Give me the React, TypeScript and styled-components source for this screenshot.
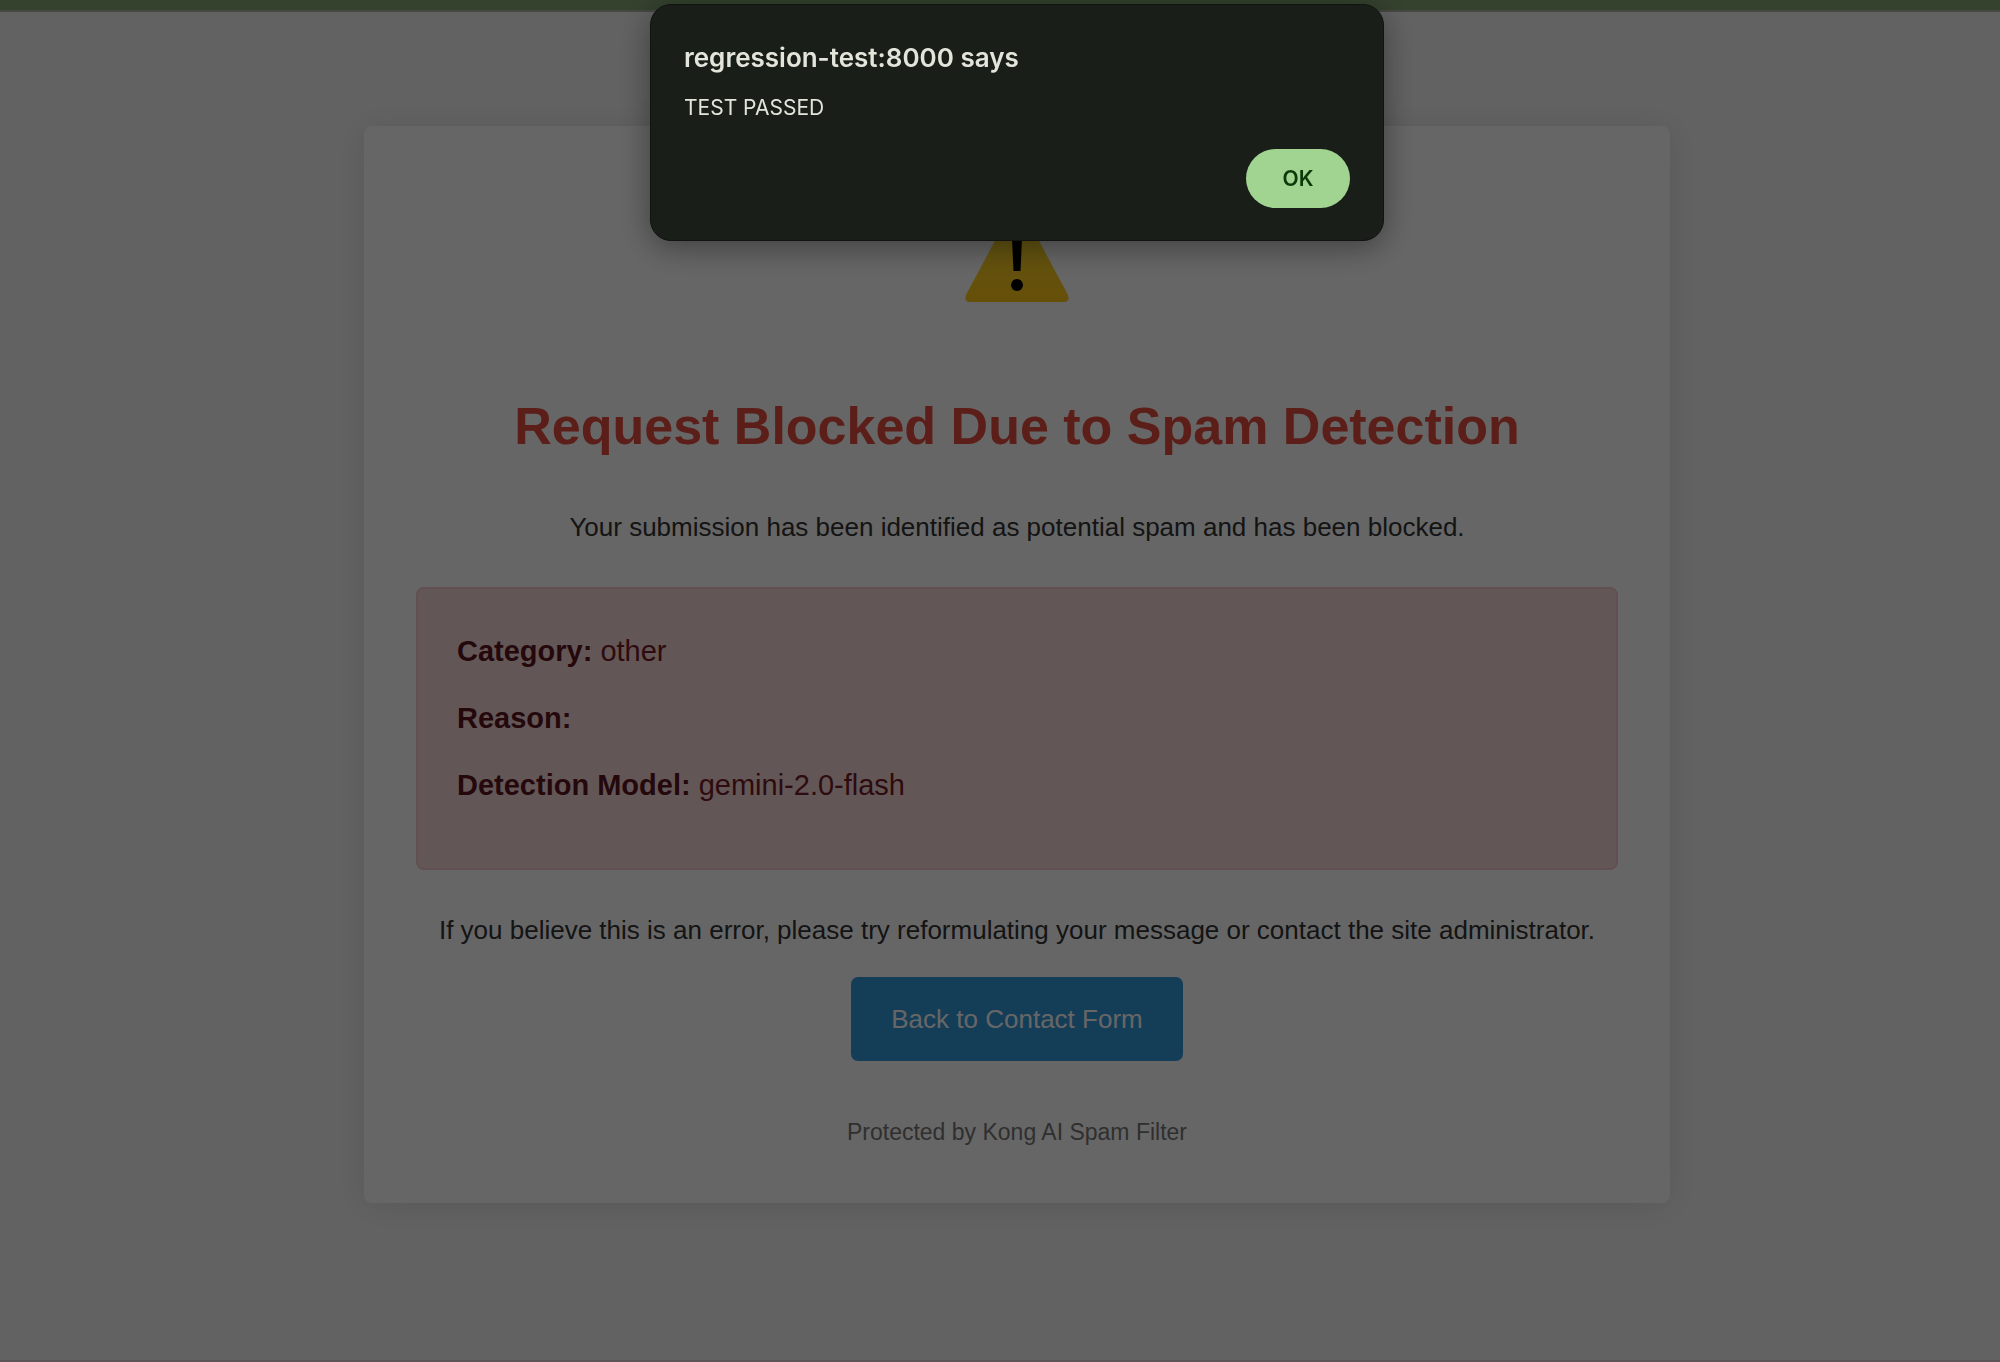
import React, { useState } from "react";
import styled, { createGlobalStyle } from "styled-components";

const GlobalStyle = createGlobalStyle`
  *, *::before, *::after { box-sizing: border-box; }
  body {
    margin: 0;
    background: #f5f5f5;
    color: #333;
    font-family: "Liberation Sans", Arial, sans-serif;
    font-size: 26px;
    line-height: 42px;
  }
`;

const Page = styled.div`
  display: flex;
  flex-direction: column;
  min-height: 100vh;
`;

const ToolbarEdge = styled.div`
  height: 12px;
  background: #84a573;
  border-bottom: 2px solid #b2b2a6;
`;

const Main = styled.main`
  flex: 1;
  display: flex;
  justify-content: center;
  align-items: flex-start;
  padding: 114px 0 114px 34px;
  border-bottom: 2px solid #e6d3da;
`;

const Card = styled.article`
  display: flex;
  flex-direction: column;
  align-items: center;
  width: 100%;
  max-width: 1306px;
  padding: 52px;
  border-radius: 8px;
  background: #fff;
  box-shadow: 0 3px 32px rgba(0, 0, 0, 0.1);
  text-align: center;
`;

const WarningIcon = styled.svg`
  display: block;
  width: 104px;
  height: 104px;
  margin: 22px 0 80px;
`;

const Title = styled.h1`
  margin: 0 0 38px;
  color: #e74c3c;
  font-size: 52px;
  line-height: 84px;
`;

const Text = styled.p`
  margin: 0;
`;

const Details = styled.section`
  display: flex;
  flex-direction: column;
  gap: 21px;
  align-self: stretch;
  margin: 39px 0;
  padding: 39px 39px 60px;
  border: 2px solid #f5c6cb;
  border-radius: 8px;
  background: #f8d7da;
  color: #721c24;
  font-size: 29px;
  line-height: 46px;
  text-align: left;
`;

const DetailLabel = styled.strong`
  color: #5a151c;
`;

const BackLink = styled.a`
  margin-top: 26px;
  padding: 21px 40px;
  border-radius: 7px;
  background: #3498db;
  color: #fff;
  text-decoration: none;
`;

const Footer = styled.footer`
  margin-top: 52px;
  color: #777;
  font-size: 23px;
  line-height: 38px;
`;

const Scrim = styled.div`
  position: fixed;
  inset: 0;
  display: flex;
  justify-content: center;
  align-items: flex-start;
  padding: 4px 0 0 34px;
  background: rgba(0, 0, 0, 0.6);
`;

const Dialog = styled.div`
  display: flex;
  flex-direction: column;
  width: 100%;
  max-width: 734px;
  padding: 36px 33px 32px;
  border: 1px solid #101310;
  border-radius: 21px;
  background: #191e18;
  box-shadow: 0 6px 32px rgba(0, 0, 0, 0.4);
  color: #e3e5db;
  font-family: Inter, sans-serif;
`;

const DialogTitle = styled.h2`
  margin: 0 0 17px;
  font-size: 26px;
  font-weight: 600;
  line-height: 34px;
`;

const DialogMessage = styled.p`
  margin: 0 0 25px;
  font-size: 21px;
  line-height: 32px;
`;

const OkButton = styled.button`
  align-self: flex-end;
  width: 104px;
  height: 59px;
  padding: 0;
  border: 0;
  border-radius: 30px;
  background: #a1d491;
  color: #0b3909;
  font: 600 21px/32px Inter, sans-serif;
`;

const details = [
  { label: "Category:", value: "other" },
  { label: "Reason:", value: "" },
  { label: "Detection Model:", value: "gemini-2.0-flash" },
];

export default function App() {
  const [open, setOpen] = useState(true);

  return (
    <>
      <GlobalStyle />
      <Page>
        <ToolbarEdge />
        <Main>
          <Card>
            <WarningIcon viewBox="0 0 104 104" aria-hidden="true">
              <defs>
                <linearGradient id="warning" x1="0" y1="0" x2="0" y2="1">
                  <stop offset="0" stopColor="#f0d838" />
                  <stop offset="1" stopColor="#ffc516" />
                </linearGradient>
              </defs>
              <path
                d="M47 9Q52 2 57 9L102.500 94Q106 102 98 102H6Q-2 102 1.500 94Z"
                fill="url(#warning)"
              />
              <path d="M46.500 28Q52 23 57.500 28L55.500 71H48.500Z" fill="#000" />
              <circle cx="52" cy="85" r="6" fill="#000" />
            </WarningIcon>
            <Title>Request Blocked Due to Spam Detection</Title>
            <Text>Your submission has been identified as potential spam and has been blocked.</Text>
            <Details>
              {details.map(({ label, value }) => (
                <Text key={label}>
                  <DetailLabel>{label}</DetailLabel> {value}
                </Text>
              ))}
            </Details>
            <Text>
              If you believe this is an error, please try reformulating your message or contact the site
              administrator.
            </Text>
            <BackLink href="#contact">Back to Contact Form</BackLink>
            <Footer>Protected by Kong AI Spam Filter</Footer>
          </Card>
        </Main>
      </Page>
      {open && (
        <Scrim>
          <Dialog role="alertdialog" aria-modal="true" aria-labelledby="alert-title" aria-describedby="alert-message">
            <DialogTitle id="alert-title">regression-test:8000 says</DialogTitle>
            <DialogMessage id="alert-message">TEST PASSED</DialogMessage>
            <OkButton type="button" onClick={() => setOpen(false)}>
              OK
            </OkButton>
          </Dialog>
        </Scrim>
      )}
    </>
  );
}
